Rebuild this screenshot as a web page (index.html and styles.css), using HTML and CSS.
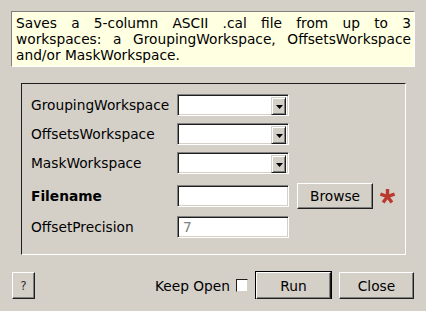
FILE: index.html
```html
<!DOCTYPE html>
<html lang="en">
<head>
    <meta charset="UTF-8">
    <title>SaveCalFile input dialog</title>
    <link rel="stylesheet" href="styles.css">
</head>
<body>

    <p class="description">Saves a 5-column ASCII .cal file from up to 3 workspaces: a GroupingWorkspace, OffsetsWorkspace and/or MaskWorkspace.</p>

    <div class="group">
        <div class="row">
            <span class="label">GroupingWorkspace</span>
            <div class="field combo"><span class="arrow"><svg width="7" height="4" viewBox="0 0 7 4"><polygon points="0,0 7,0 3.5,4" fill="#000"/></svg></span></div>
        </div>
        <div class="row">
            <span class="label">OffsetsWorkspace</span>
            <div class="field combo"><span class="arrow"><svg width="7" height="4" viewBox="0 0 7 4"><polygon points="0,0 7,0 3.5,4" fill="#000"/></svg></span></div>
        </div>
        <div class="row">
            <span class="label">MaskWorkspace</span>
            <div class="field combo"><span class="arrow"><svg width="7" height="4" viewBox="0 0 7 4"><polygon points="0,0 7,0 3.5,4" fill="#000"/></svg></span></div>
        </div>
        <div class="row row-file">
            <span class="label bold">Filename</span>
            <div class="field"></div>
            <button class="btn browse">Browse</button>
            <!-- required marker -->
            <svg class="required" width="17" height="16" viewBox="0 0 17 16">
                <g stroke="#b93a2c" stroke-width="3.4">
                    <line x1="8.5" y1="8.5" x2="8.5" y2="1"/>
                    <line x1="8.5" y1="8.5" x2="15.6" y2="6.2"/>
                    <line x1="8.5" y1="8.5" x2="12.9" y2="14.6"/>
                    <line x1="8.5" y1="8.5" x2="4.1" y2="14.6"/>
                    <line x1="8.5" y1="8.5" x2="1.4" y2="6.2"/>
                </g>
            </svg>
        </div>
        <div class="row">
            <span class="label">OffsetPrecision</span>
            <div class="field hint">7</div>
        </div>
    </div>

    <div class="footer">
        <button class="btn help">?</button>
        <span class="spacer"></span>
        <span class="keep-open">Keep Open</span>
        <span class="check"></span>
        <button class="btn default">Run</button>
        <button class="btn">Close</button>
    </div>

</body>
</html>
```

FILE: styles.css
```css
body {
    margin: 0;
    background: #d4d0c8;
    font-family: "DejaVu Sans", sans-serif;
    font-size: 13.75px;
    color: #000;
    display: flex;
    flex-direction: column;
}

.description {
    margin: 11px 0 0 11px;
    width: 404px;
    box-sizing: border-box;
    padding: 3px 3px 3px 4px;
    background: #ffffe1;
    border: 1px solid;
    border-color: #808080 #fff #fff #808080;
    line-height: 16px;
    text-align: justify;
}

.group {
    margin: 16px 0 0 21px;
    width: 385px;
    box-sizing: border-box;
    padding: 10px 0 16px 9px;
    border: 1px solid;
    border-color: #1e1e1e #fff #fff #1e1e1e;
    display: flex;
    flex-direction: column;
    gap: 7px;
}

.row {
    display: flex;
    align-items: center;
    height: 22px;
}

.row-file {
    height: 25px;
    margin: 2px 0 1px;
}

.label {
    width: 146px;
}

.bold {
    font-weight: bold;
}

.field {
    width: 112px;
    height: 22px;
    box-sizing: border-box;
    background: #fff;
    border: 1px solid;
    border-color: #808080 #fff #fff #808080;
    box-shadow: inset 1px 1px #1e1e1e, inset -1px -1px #d4d0c8;
}

.hint {
    color: #808080;
    padding: 2px 0 0 5px;
    line-height: 16px;
}

.combo {
    display: flex;
    justify-content: flex-end;
    padding: 1px 2px 1px 1px;
}

.arrow {
    width: 15px;
    height: 18px;
    box-sizing: border-box;
    margin-top: 1px;
    background: #d4d0c8;
    border: 1px solid;
    border-color: #d4d0c8 #1e1e1e #1e1e1e #d4d0c8;
    box-shadow: inset 1px 1px #fff, inset -1px -1px #808080;
    display: flex;
    align-items: center;
    justify-content: center;
    padding: 1px 0 0 1px;
}

.btn {
    font: inherit;
    color: #000;
    background: #d4d0c8;
    border: 1px solid;
    border-color: #fff #1e1e1e #1e1e1e #fff;
    box-shadow: inset -1px -1px #808080;
    height: 26px;
    padding: 0;
}

.browse {
    width: 76px;
    margin-left: 8px;
}

.required {
    margin-left: 6px;
}

.footer {
    margin: 17px 12px 0 12px;
    display: flex;
    align-items: center;
}

.footer .btn {
    height: 27px;
}

.help {
    width: 23px;
    font-size: 12px;
    color: #333;
}

.spacer {
    flex: 1;
}

.keep-open {
    margin-right: 6px;
}

.check {
    width: 12px;
    height: 13px;
    box-sizing: border-box;
    background: #fff;
    border: 1px solid;
    border-color: #1e1e1e #d4d0c8 #d4d0c8 #1e1e1e;
    margin-right: 8px;
}

.default {
    width: 75px;
    outline: 1px solid #000;
    margin-right: 8px;
}

.footer .btn:last-child {
    width: 75px;
}
```
